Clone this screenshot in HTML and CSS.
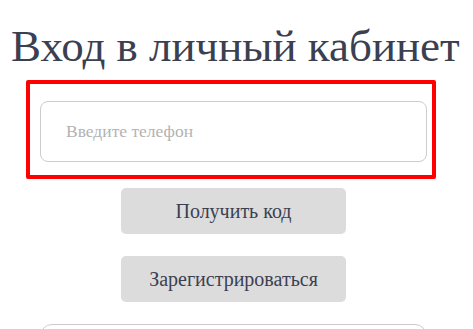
FILE: index.html
```html
<!DOCTYPE html>
<html lang="ru">
<head>
<meta charset="utf-8">
<title>Вход в личный кабинет</title>
<link rel="stylesheet" href="styles.css">
</head>
<body>
<main class="page">
  <h1 class="title">Вход в личный кабинет</h1>
  <div class="field-frame">
    <input class="field" type="tel" placeholder="Введите телефон">
  </div>
  <button class="btn" type="button">Получить код</button>
  <button class="btn" type="button">Зарегистрироваться</button>
  <input class="field field-next" type="text">
</main>
</body>
</html>
```
FILE: styles.css
```css
html, body {
  margin: 0;
  padding: 0;
  background: #ffffff;
}
body {
  font-family: "Liberation Serif", "Times New Roman", Times, serif;
  color: #3b4051;
  overflow: hidden;
}
.page {
  width: 467px;
  display: flex;
  flex-direction: column;
  align-items: flex-start;
  padding-top: 21px;
}
.title {
  margin: 0 0 0 11px;
  font-weight: normal;
  font-size: 45px;
  line-height: 50px;
  color: #3b4051;
  white-space: nowrap;
}
.field-frame {
  box-sizing: border-box;
  width: 410px;
  height: 99px;
  margin: 9px 0 0 26px;
  border: 4px solid #ff0000;
  border-radius: 2px;
  padding: 17px 5px 13px 10px;
}
.field {
  box-sizing: border-box;
  display: block;
  width: 387px;
  height: 61px;
  border: 1px solid #cccccc;
  border-radius: 8px;
  padding: 0 25px;
  font-family: "Liberation Serif", "Times New Roman", Times, serif;
  font-size: 17.5px;
  color: #3b4051;
  background: #fff;
  outline: none;
}
.field::placeholder {
  color: #b3b3b3;
}
.field-next {
  margin: 22px 0 0 40px;
  border-radius: 12px;
}
.btn {
  box-sizing: border-box;
  width: 225px;
  height: 46px;
  margin: 9px 0 0 121px;
  border: none;
  border-radius: 5px;
  background: #dcdcdc;
  font-family: "Liberation Serif", "Times New Roman", Times, serif;
  font-size: 20px;
  color: #3b4051;
  padding: 0;
}
.btn + .btn {
  margin-top: 22px;
}
```
